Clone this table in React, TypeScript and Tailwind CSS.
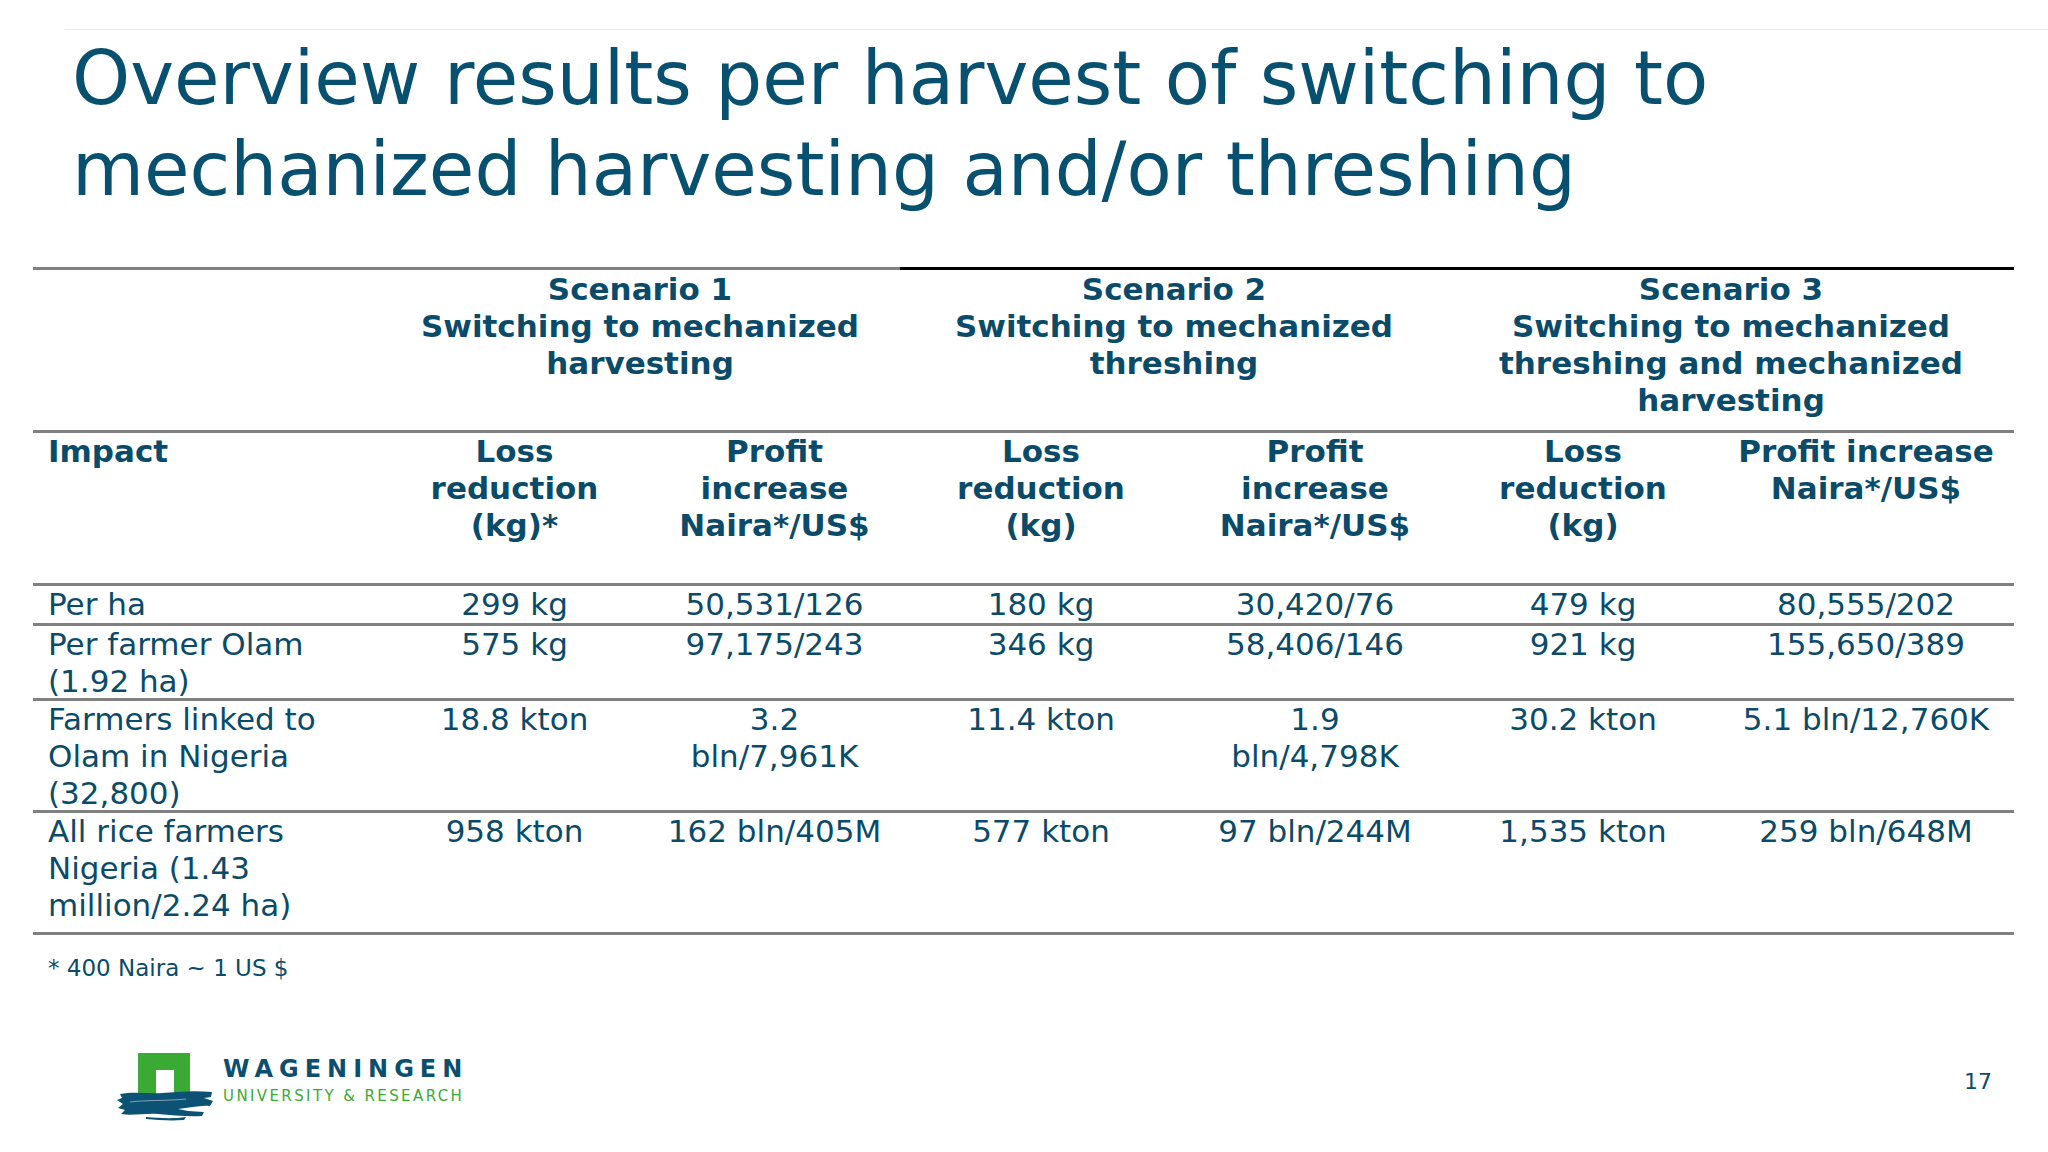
import React from 'react';

const cols = 'grid grid-cols-[347px_269px_251px_282px_266px_270px_296px]';

const scenarios = [
  ['Scenario 1', 'Switching to mechanized', 'harvesting'],
  ['Scenario 2', 'Switching to mechanized', 'threshing'],
  ['Scenario 3', 'Switching to mechanized', 'threshing and mechanized', 'harvesting'],
];

const subHeads = [
  ['Loss', 'reduction', '(kg)*'],
  ['Profit', 'increase', 'Naira*/US$'],
  ['Loss', 'reduction', '(kg)'],
  ['Profit', 'increase', 'Naira*/US$'],
  ['Loss', 'reduction', '(kg)'],
  ['Profit increase', 'Naira*/US$'],
];

const rows: { label: string[]; cells: string[][]; h: string }[] = [
  {
    label: ['Per ha'],
    cells: [['299 kg'], ['50,531/126'], ['180 kg'], ['30,420/76'], ['479 kg'], ['80,555/202']],
    h: 'h-[40px]',
  },
  {
    label: ['Per farmer Olam', '(1.92 ha)'],
    cells: [['575 kg'], ['97,175/243'], ['346 kg'], ['58,406/146'], ['921 kg'], ['155,650/389']],
    h: 'h-[75px]',
  },
  {
    label: ['Farmers linked to', 'Olam in Nigeria', '(32,800)'],
    cells: [['18.8 kton'], ['3.2', 'bln/7,961K'], ['11.4 kton'], ['1.9', 'bln/4,798K'], ['30.2 kton'], ['5.1 bln/12,760K']],
    h: 'h-[112px]',
  },
  {
    label: ['All rice farmers', 'Nigeria (1.43', 'million/2.24 ha)'],
    cells: [['958 kton'], ['162 bln/405M'], ['577 kton'], ['97 bln/244M'], ['1,535 kton'], ['259 bln/648M']],
    h: 'h-[122px]',
  },
];

const Lines = ({ lines }: { lines: string[] }) => (
  <>
    {lines.map((l, i) => (
      <div key={i} className="whitespace-nowrap">
        {l}
      </div>
    ))}
  </>
);

const Logo = () => (
  <svg width="100" height="72" viewBox="0 0 100 72">
    <path d="M22 3 H74 V48 H58 V20 H40 V48 H22 Z" fill="#3aaa35" />
    <path
      d="M4 44 C18 41 32 44 46 43 C60 42 76 40 96 42 L95 47 L88 48 L97 51 L94 56 C84 55 74 58 62 59 L72 61 L88 62 L86 66 C72 67 56 65 42 64 C30 63 16 66 5 64 L9 60 L2 58 L7 54 L1 50 L6 48 Z"
      fill="#0b5275"
    />
    <path d="M30 67 C44 68 56 69 70 67 L68 70 C54 71 42 70 30 69 Z" fill="#0b5275" />
    <path d="M14 52 C30 50 50 51 70 49" stroke="#ffffff" strokeWidth="0.8" fill="none" opacity="0.6" />
  </svg>
);

export default function App() {
  return (
    <div className="w-[2048px] h-[1152px] bg-white overflow-hidden font-['DejaVu_Sans',sans-serif] text-[#0b4b6a]">
      {/* faint rule above title */}
      <div className="ml-[65px] mt-[29px] h-px bg-[#ececec]" />

      <h1 className="ml-[72px] mt-[3px] text-[74px] leading-[91px] text-[#07506f] font-normal">
        Overview results per harvest of switching to
        <br />
        mechanized harvesting and/or threshing
      </h1>

      <div className="ml-[33px] mt-[52px] w-[1981px] text-[31px] leading-[37px]">
        <div className="flex h-[3px]">
          <div className="w-[867px] bg-[#808080]" />
          <div className="flex-1 bg-black" />
        </div>

        {/* scenario header */}
        <div className={`${cols} h-[163px] pt-px border-b-[3px] border-[#808080] font-bold`}>
          <div />
          {scenarios.map((s, i) => (
            <div key={i} className="col-span-2 text-center">
              <Lines lines={s} />
            </div>
          ))}
        </div>

        {/* column header */}
        <div className={`${cols} h-[153px] border-b-[3px] border-[#808080] font-bold`}>
          <div className="pl-[15px]">Impact</div>
          {subHeads.map((s, i) => (
            <div key={i} className="text-center">
              <Lines lines={s} />
            </div>
          ))}
        </div>

        {rows.map((r, i) => (
          <div key={i} className={`${cols} ${r.h} border-b-[3px] border-[#808080]`}>
            <div className="pl-[15px]">
              <Lines lines={r.label} />
            </div>
            {r.cells.map((c, j) => (
              <div key={j} className="text-center">
                <Lines lines={c} />
              </div>
            ))}
          </div>
        ))}

        <div className="mt-[19px] pl-[15px] text-[23px] leading-[28px]">* 400 Naira ~ 1 US $</div>
      </div>

      {/* footer */}
      <div className="flex items-start justify-between mt-[68px] pl-[116px] pr-[56px]">
        <div className="flex items-start">
          <Logo />
          <div className="ml-[7px] mt-[6px]">
            <div className="text-[24px] leading-[26px] tracking-[6px] font-bold text-[#0b4f70]">WAGENINGEN</div>
            <div className="mt-[6px] text-[15px] leading-[16px] tracking-[2.4px] text-[#3aaa35]">
              UNIVERSITY &amp; RESEARCH
            </div>
          </div>
        </div>
        <div className="mt-[19px] text-[22px] leading-[26px] text-[#0b4b6a]">17</div>
      </div>
    </div>
  );
}
